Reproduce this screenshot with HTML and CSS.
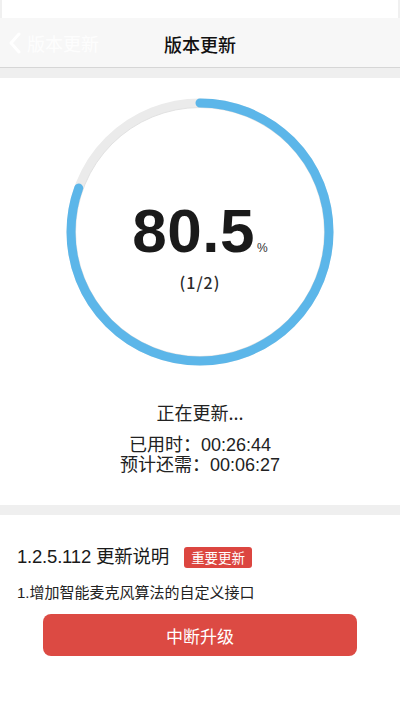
FILE: index.html
```html
<!DOCTYPE html>
<html lang="zh-CN">
<head>
<meta charset="utf-8">
<title>版本更新</title>
<link rel="stylesheet" href="styles.css">
</head>
<body>
<div class="status"></div>
<header class="navbar">
  <div class="back">
    <svg class="chev" width="12" height="22" viewBox="0 0 12 22"><path d="M10 2 L2 11 L10 20" fill="none" stroke="#ffffff" stroke-width="3" stroke-linecap="round" stroke-linejoin="round"/></svg>
    <span>版本更新</span>
  </div>
  <h1 class="title">版本更新</h1>
</header>
<div class="gap"></div>
<section class="progress">
  <div class="ring">
    <svg width="268" height="268" viewBox="0 0 268 268">
      <circle cx="134" cy="134" r="129" fill="none" stroke="#ebebeb" stroke-width="9"/>
      <circle cx="134" cy="134" r="124.5" fill="none" stroke="#e2e2e2" stroke-width="1"/>
      <circle cx="134" cy="134" r="129" fill="none" stroke="#5cb6e9" stroke-width="9" stroke-linecap="round" stroke-dasharray="652.5 810.5" transform="rotate(-90 134 134)"/>
    </svg>
    <div class="ring-text">
      <div class="pct"><span class="num">80.5</span><span class="unit">%</span></div>
      <div class="step">(1/2)</div>
    </div>
  </div>
  <div class="state">正在更新...</div>
  <div class="times">
    <div>已用时：00:26:44</div>
    <div>预计还需：00:06:27</div>
  </div>
</section>
<div class="gap"></div>
<section class="notes">
  <div class="notes-head">
    <h2>1.2.5.112 更新说明</h2>
    <span class="badge">重要更新</span>
  </div>
  <p class="desc">1.增加智能麦克风算法的自定义接口</p>
  <button class="btn">中断升级</button>
</section>
</body>
</html>
```
FILE: styles.css
```css
* { box-sizing: border-box; }
html, body { margin: 0; padding: 0; }
body {
  width: 400px;
  height: 710px;
  background: #ffffff;
  font-family: "Liberation Sans", "Noto Sans CJK SC", sans-serif;
  color: #222222;
  overflow: hidden;
}
.status {
  height: 18px;
  background: #ffffff;
  border-left: 2px solid #f0f0f0;
  border-right: 2px solid #f0f0f0;
}
.navbar {
  height: 50px;
  background: #f7f7f7;
  border-bottom: 1px solid #d6d6d6;
  display: flex;
  align-items: center;
  justify-content: center;
  position: relative;
}
.back {
  position: absolute;
  left: 9px;
  top: 14px;
  display: flex;
  align-items: center;
  gap: 6px;
  color: rgba(255, 255, 255, 0.85);
  font-family: "Noto Sans CJK SC", sans-serif;
  font-size: 18px;
  line-height: 22px;
}
.chev { display: block; }
.title {
  margin: 0;
  font-family: "Noto Sans CJK SC", sans-serif;
  font-size: 18px;
  font-weight: 500;
  color: #111111;
  line-height: 24px;
  padding-top: 2px;
}
.gap {
  height: 10px;
  background: #efefef;
}
.progress {
  height: 427px;
  padding-top: 20px;
  display: flex;
  flex-direction: column;
  align-items: center;
}
.ring {
  width: 268px;
  height: 268px;
  position: relative;
}
.ring svg { display: block; }
.ring-text {
  position: absolute;
  inset: 0;
  display: flex;
  flex-direction: column;
  align-items: center;
  padding-top: 99px;
}
.pct {
  display: flex;
  align-items: baseline;
}
.num {
  font-size: 62px;
  font-weight: bold;
  line-height: 68px;
  color: #1a1a1a;
  letter-spacing: 0.5px;
}
.unit {
  font-size: 12px;
  margin-left: 2px;
  color: #333333;
}
.step {
  margin-top: 7px;
  font-family: "Noto Sans CJK SC", sans-serif;
  font-size: 16px;
  font-weight: 500;
  line-height: 20px;
  letter-spacing: 1px;
  color: #2a2a2a;
}
.state {
  margin-top: 34px;
  font-family: "Noto Sans CJK SC", sans-serif;
  font-size: 18px;
  line-height: 24px;
  color: #222222;
}
.times {
  margin-top: 11px;
  font-family: "Liberation Sans", "Noto Sans CJK SC", sans-serif;
  font-size: 18px;
  line-height: 20px;
  text-align: center;
  color: #222222;
}
.notes {
  padding: 30px 17px 0 17px;
}
.notes-head {
  display: flex;
  align-items: center;
  gap: 15px;
  height: 24px;
}
.notes-head h2 {
  margin: 0;
  font-family: "Liberation Sans", "Noto Sans CJK SC", sans-serif;
  font-size: 18.5px;
  font-weight: normal;
  line-height: 24px;
  letter-spacing: -0.2px;
  color: #1a1a1a;
}
.badge {
  background: #dc4640;
  color: #ffffff;
  font-family: "Noto Sans CJK SC", sans-serif;
  font-size: 13.5px;
  line-height: 21px;
  height: 21px;
  padding: 0 7px;
  border-radius: 3px;
}
.desc {
  margin: 14px 0 0 0;
  font-family: "Liberation Sans", "Noto Sans CJK SC", sans-serif;
  font-size: 15px;
  line-height: 20px;
  color: #222222;
}
.btn {
  display: block;
  margin: 11px 0 0 26px;
  width: 314px;
  height: 42px;
  border: none;
  border-radius: 8px;
  background: #dc4a43;
  color: #ffffff;
  font-family: "Noto Sans CJK SC", sans-serif;
  font-size: 17px;
}
```
